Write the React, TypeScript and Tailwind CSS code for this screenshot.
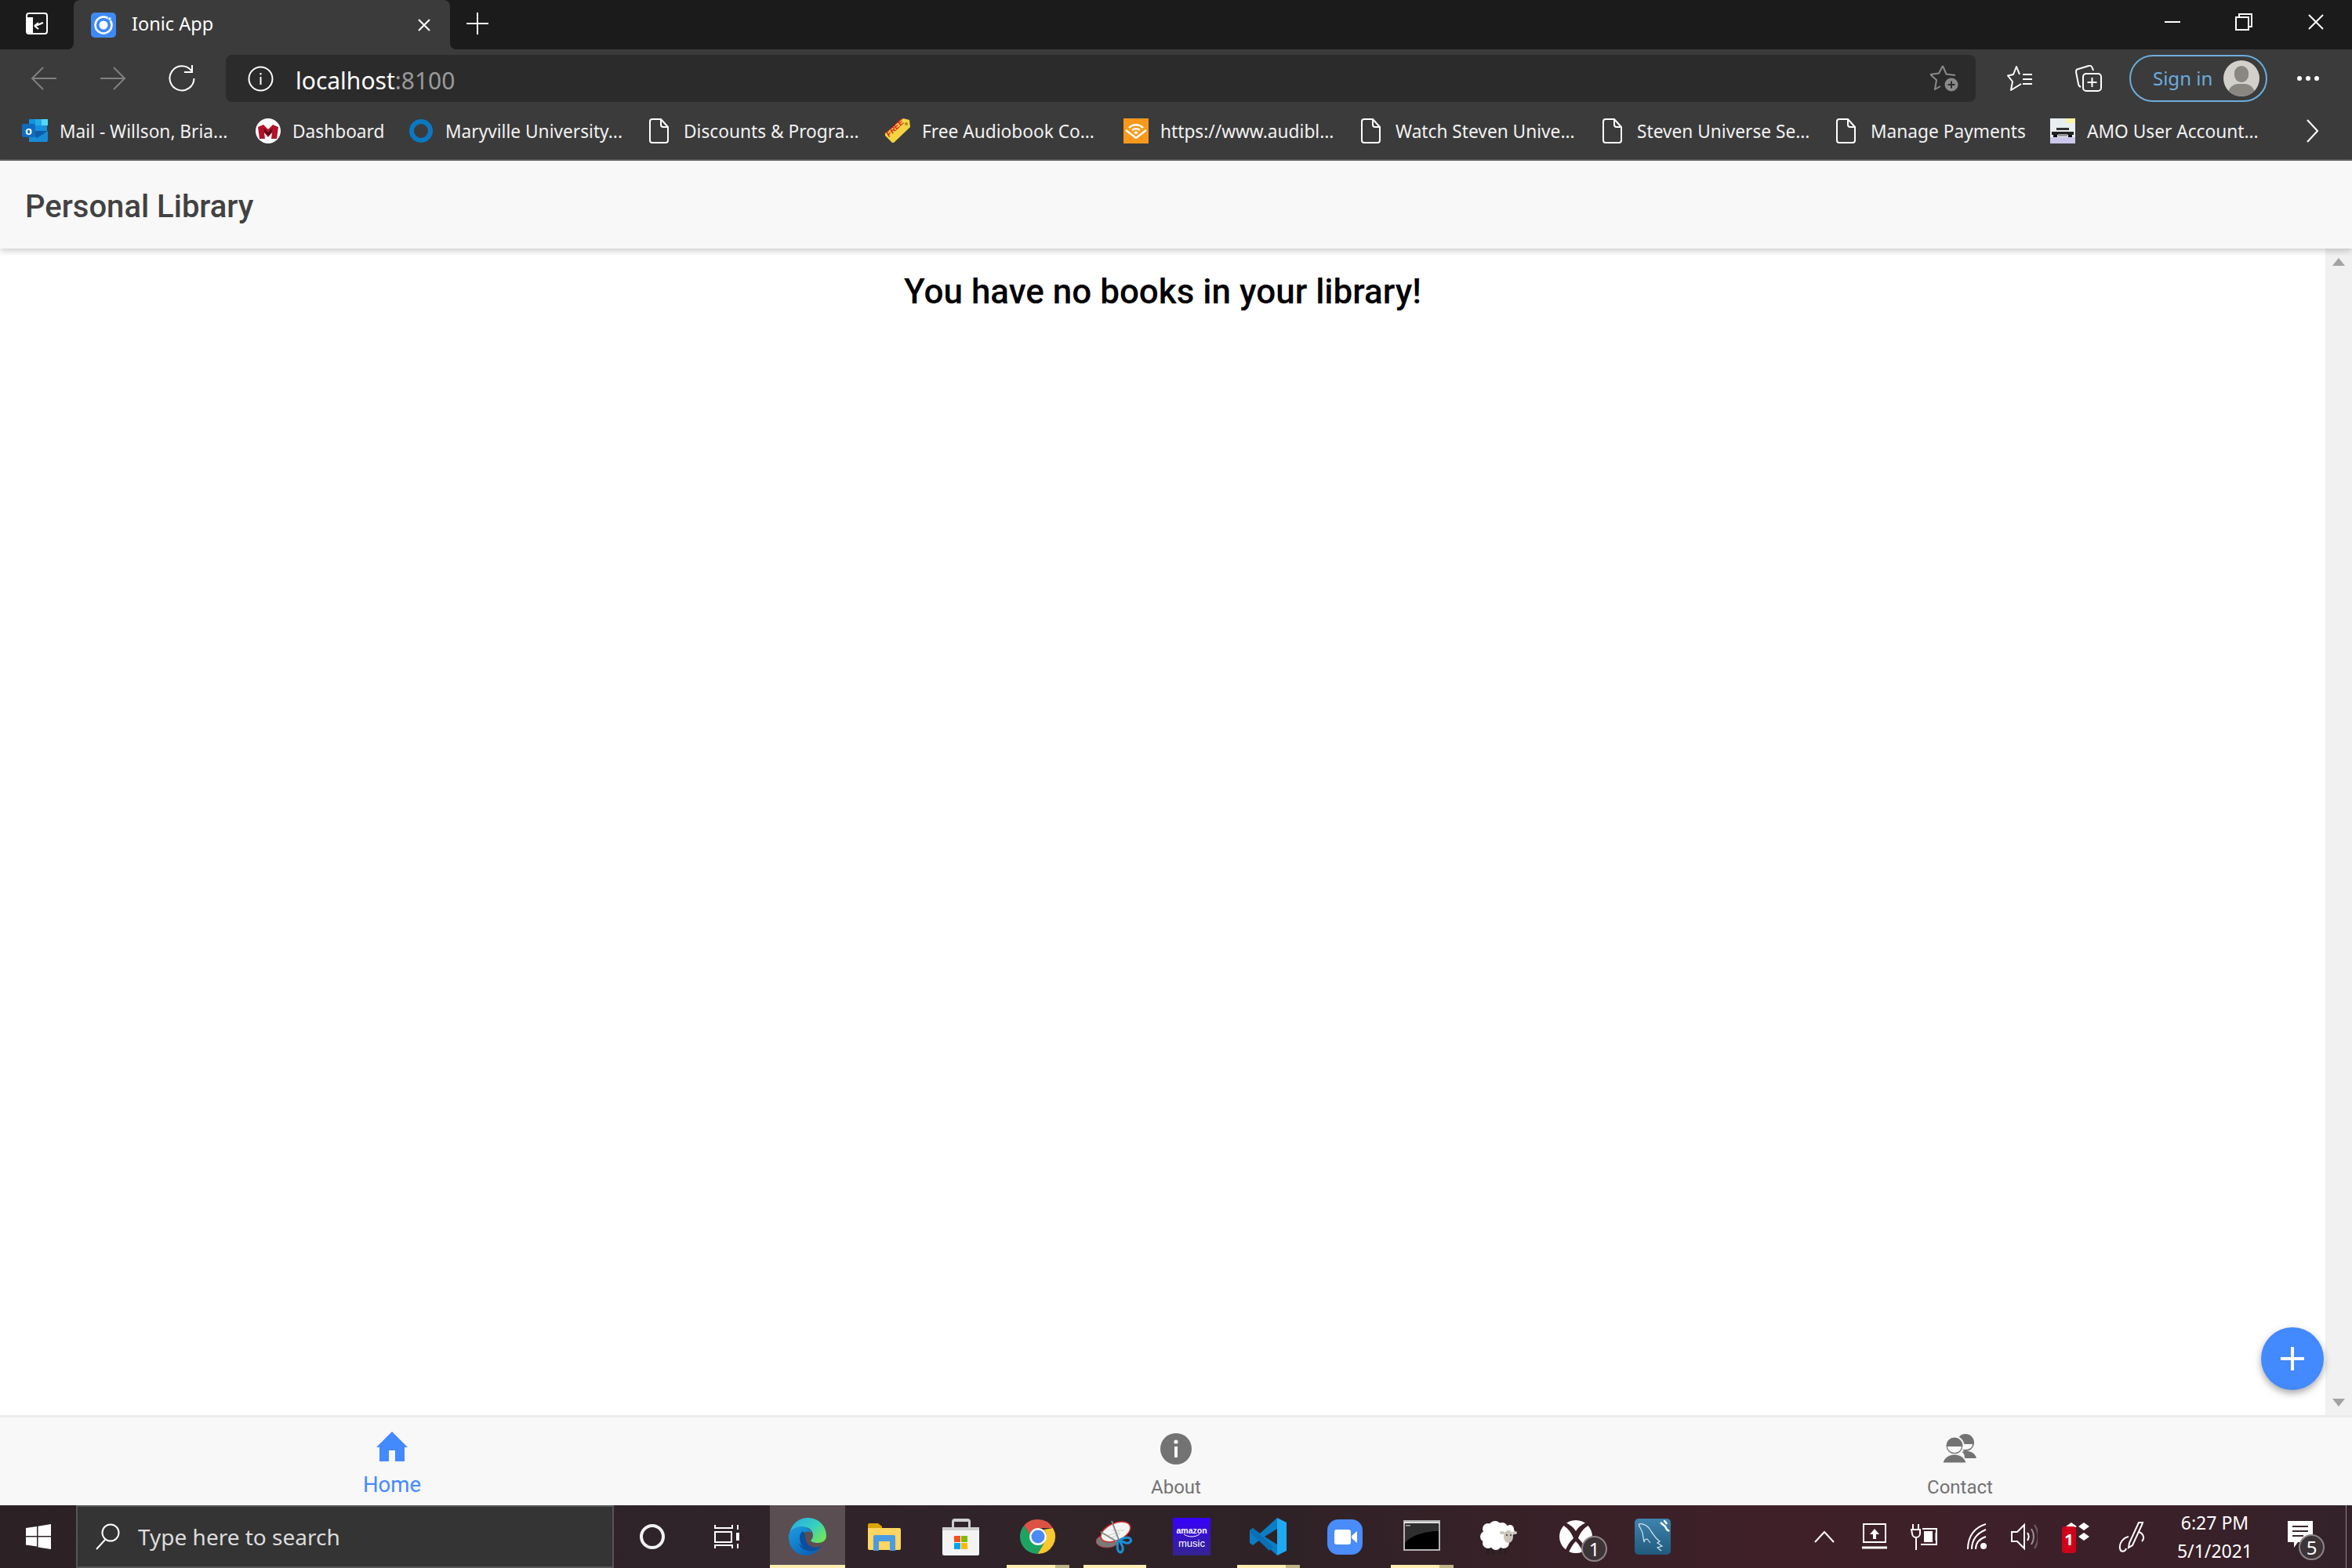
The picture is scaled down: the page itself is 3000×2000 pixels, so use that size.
import type { ReactNode } from 'react';

const PageIcon = () => (
  <svg width="26" height="32" viewBox="0 0 26 32" fill="none" stroke="#fff" strokeWidth="2">
    <path d="M4 1h11l9 10v17a3 3 0 0 1-3 3H4a3 3 0 0 1-3-3V4a3 3 0 0 1 3-3z" />
    <path d="M15 1v7a3 3 0 0 0 3 3h6" />
  </svg>
);

const OutlookIcon = () => (
  <svg width="34" height="32" viewBox="0 0 34 32">
    <rect x="9" y="1" width="23" height="15" fill="#1490df" />
    <rect x="17" y="1" width="8" height="8" fill="#28a8ea" />
    <rect x="25" y="1" width="8" height="8" fill="#50d9ff" />
    <path d="M9 16h24v12a2 2 0 0 1-2 2H9z" fill="#1a8ad6" />
    <path d="M9 16l24 0v0L19 25z" fill="#0a5ea8" />
    <rect x="0" y="7" width="17" height="17" rx="2" fill="#0f6cbd" />
    <text x="8.5" y="21" textAnchor="middle" fontSize="14" fontWeight="700" fill="#fff" fontFamily="Liberation Sans">o</text>
  </svg>
);

const MaryvilleMIcon = () => (
  <svg width="32" height="32" viewBox="0 0 32 32">
    <circle cx="16" cy="16" r="16" fill="#fff" />
    <path d="M3 11l7-3 6 6 6-6 7 3-2 15h-7l1-8-5 6-5-6 1 8H5z" fill="#b4122b" />
    <path d="M10 12l6 6 6-6-2 7-4 3-4-3z" fill="#5e0b18" />
  </svg>
);

const RingIcon = () => (
  <svg width="32" height="32" viewBox="0 0 32 32" fill="none">
    <ellipse cx="16" cy="16" rx="12" ry="12" stroke="#0a78c2" strokeWidth="6" />
  </svg>
);

const FreeTagIcon = () => (
  <svg width="34" height="32" viewBox="0 0 34 32">
    <path d="M24 0l8 2 1 9-21 20-2 0-9-9 0-3z" fill="#f5d442" />
    <circle cx="28" cy="7" r="2" fill="#a88a1c" />
    <text x="0" y="0" transform="translate(6 24) rotate(-44)" fontSize="10" fontWeight="700" fontStyle="italic" fill="#e21a1a" fontFamily="Liberation Sans">FREE</text>
  </svg>
);

const AudibleIcon = () => (
  <svg width="32" height="32" viewBox="0 0 32 32" fill="none" stroke="#fff" strokeWidth="2.4">
    <rect width="32" height="32" fill="#f8991c" stroke="none" />
    <path d="M3 15l13 10 13-10" />
    <path d="M7 12c5-5 13-5 18 0" />
    <path d="M11 15c3-2.500 7-2.500 10 0" />
    <path d="M14 19l2-1.500 2 1.500" />
  </svg>
);

const CarIcon = () => (
  <svg width="32" height="32" viewBox="0 0 32 32">
    <rect width="32" height="32" fill="#e9eef0" />
    <rect x="20" y="0" width="12" height="6" fill="#fbf3a6" />
    <rect x="0" y="24" width="32" height="8" fill="#cbc7ea" />
    <rect x="8" y="12" width="16" height="3" fill="#333" />
    <rect x="2" y="17" width="28" height="4" fill="#222" />
    <rect x="4" y="21" width="5" height="3" fill="#111" />
    <rect x="23" y="21" width="5" height="3" fill="#111" />
    <rect x="10" y="20" width="12" height="3" fill="#999" />
  </svg>
);

type Bookmark = { label: string; width: string; icon: ReactNode };

const bookmarks: Bookmark[] = [
  { label: 'Mail - Willson, Bria...', width: 'w-[297px]', icon: <OutlookIcon /> },
  { label: 'Dashboard', width: 'w-[195px]', icon: <MaryvilleMIcon /> },
  { label: 'Maryville University...', width: 'w-[304px]', icon: <RingIcon /> },
  { label: 'Discounts & Progra...', width: 'w-[304px]', icon: <PageIcon /> },
  { label: 'Free Audiobook Co...', width: 'w-[304px]', icon: <FreeTagIcon /> },
  { label: 'https://www.audibl...', width: 'w-[300px]', icon: <AudibleIcon /> },
  { label: 'Watch Steven Unive...', width: 'w-[308px]', icon: <PageIcon /> },
  { label: 'Steven Universe Se...', width: 'w-[298px]', icon: <PageIcon /> },
  { label: 'Manage Payments', width: 'w-[276px]', icon: <PageIcon /> },
  { label: 'AMO User Account...', width: 'w-[306px]', icon: <CarIcon /> },
];

const Tabs = () => (
  <div className="flex h-[63px] shrink-0 bg-[#1b1b1b]">
    <div className="h-full w-[94px] bg-[linear-gradient(to_top,#3b3b3b_10px,#1b1b1b_10px)]">
      <div className="flex h-full items-center justify-center rounded-br-[8px] bg-[#1b1b1b] pb-[3px]">
        <svg width="28" height="28" viewBox="0 0 28 28">
          <rect x="1" y="1" width="26" height="26" rx="3" fill="none" stroke="#fff" strokeWidth="2" />
          <path d="M1 6h8v21H4a3 3 0 0 1-3-3z" fill="#fff" />
          <path d="M22 13c-3 1-6 3-10 4M11 17l5-4M11 17l5 4" fill="none" stroke="#fff" strokeWidth="2.200" />
        </svg>
      </div>
    </div>
    <div className="flex h-full w-[480px] items-center rounded-t-[8px] bg-[#3b3b3b] pl-[22px]">
      <svg width="32" height="32" viewBox="0 0 32 32">
        <rect width="32" height="32" rx="5" fill="#4089f5" />
        <circle cx="16" cy="16" r="10.500" fill="none" stroke="#fff" strokeWidth="2.500" />
        <circle cx="16" cy="16" r="5.500" fill="#fff" />
        <circle cx="24" cy="8" r="2.200" fill="#fff" stroke="#4089f5" />
      </svg>
      <span className="mb-[1px] ml-[20px] text-[23.500px] leading-none text-white">Ionic App</span>
      <svg className="ml-auto mr-[25px]" width="16" height="16" viewBox="0 0 16 16" stroke="#fff" strokeWidth="2">
        <path d="M1 1l14 14M15 1L1 15" />
      </svg>
    </div>
    <div className="h-full flex-1 bg-[linear-gradient(to_top,#3b3b3b_10px,#1b1b1b_10px)]">
      <div className="flex h-full items-center rounded-bl-[8px] bg-[#1b1b1b] pb-[3px]">
        <svg className="ml-[21px]" width="28" height="28" viewBox="0 0 28 28" stroke="#fff" strokeWidth="2">
          <path d="M14 0v28M0 14h28" />
        </svg>
        <svg className="mb-[4px] ml-auto" width="20" height="2" viewBox="0 0 20 2" stroke="#fff" strokeWidth="2">
          <path d="M0 1h20" />
        </svg>
        <svg className="mb-[4px] ml-[70px]" width="22" height="22" viewBox="0 0 22 22" fill="none" stroke="#fff" strokeWidth="2">
          <rect x="1" y="5" width="16" height="16" />
          <path d="M5 5V1h16v16h-4" />
        </svg>
        <svg className="mb-[4px] ml-[71px] mr-[36px]" width="20" height="20" viewBox="0 0 20 20" stroke="#fff" strokeWidth="2">
          <path d="M1 1l18 18M19 1L1 19" />
        </svg>
      </div>
    </div>
  </div>
);

const Toolbar = () => (
  <div className="flex h-[74px] shrink-0 items-center bg-[#3b3b3b] pl-[12px]">
    <div className="flex w-[88px] justify-center">
      <svg width="34" height="30" viewBox="0 0 34 30" fill="none" stroke="#808080" strokeWidth="2">
        <path d="M33 15H2M16 1L2 15l14 14" />
      </svg>
    </div>
    <div className="flex w-[88px] justify-center">
      <svg width="34" height="30" viewBox="0 0 34 30" fill="none" stroke="#808080" strokeWidth="2">
        <path d="M1 15h31M18 1l14 14-14 14" />
      </svg>
    </div>
    <div className="flex w-[88px] justify-center">
      <svg width="34" height="34" viewBox="0 0 34 34" fill="none" stroke="#fff" strokeWidth="2">
        <path d="M29 7a15.500 15.500 0 1 0 3.500 10" />
        <path d="M20 8h10V-1" transform="translate(0 1)" />
      </svg>
    </div>
    <div className="ml-[12px] flex h-[60px] w-[2232px] items-center rounded-[8px] bg-[#2b2b2b] pl-[28px] pr-[22px]">
      <svg width="33" height="33" viewBox="0 0 33 33" fill="none" stroke="#fff" strokeWidth="2">
        <circle cx="16.500" cy="16.500" r="15" />
        <path d="M16.500 14v10M16.500 9v2.500" />
      </svg>
      <span className="ml-[28px] mt-[5px] text-[30px] leading-none text-white">
        localhost<span className="text-[#9a9a9a]">:8100</span>
      </span>
      <svg className="ml-auto" width="36" height="34" viewBox="0 0 36 34" fill="none" stroke="#8a8a8a" strokeWidth="2" strokeLinejoin="round">
        <path d="M16 1l4.500 10.500L32 13M13 27l-7 4 2-12-8-7 11-1.500L16 1" />
        <circle cx="27" cy="25" r="8.500" fill="#8a8a8a" stroke="none" />
        <path d="M27 20.500v9M22.500 25h9" stroke="#2b2b2b" />
      </svg>
    </div>
    <div className="flex w-[112px] justify-center">
      <svg width="32" height="32" viewBox="0 0 32 32" fill="none" stroke="#fff" strokeWidth="2" strokeLinejoin="round">
        <path d="M16 11L12 1 8 11l-7 1.500 6 7.500-2 11 9-5.500 4-2.500" />
        <path d="M20 11h12M20 17h12M20 23h12" />
      </svg>
    </div>
    <div className="flex w-[64px] justify-center">
      <svg width="34" height="34" viewBox="0 0 34 34" fill="none" stroke="#fff" strokeWidth="2">
        <rect x="10" y="11" width="23" height="22" rx="4" />
        <path d="M21.500 16v12M15.500 22h12" />
        <path d="M7 28c-2-1-3-2-3-4L1 9c0-2 1-4 3-4l13-4c2-1 4 0 5 3l1 3" />
      </svg>
    </div>
    <div className="ml-[20px] flex h-[60px] w-[176px] items-center rounded-full border-2 border-[#6cadde] pl-[28px]">
      <span className="whitespace-nowrap text-[24px] leading-none text-[#6cadde]">Sign in</span>
      <div className="relative ml-auto mr-[8px] size-[46px] shrink-0 overflow-hidden rounded-full bg-[#d2d0cb]">
        <div className="absolute left-[14px] top-[7px] h-[21px] w-[18px] rounded-full bg-[#8a8682]" />
        <div className="absolute left-[6px] top-[30px] h-[26px] w-[34px] rounded-full bg-[#8a8682]" />
      </div>
    </div>
    <div className="flex w-[104px] justify-center gap-[5px]">
      <div className="size-[6px] rounded-full bg-white" />
      <div className="size-[6px] rounded-full bg-white" />
      <div className="size-[6px] rounded-full bg-white" />
    </div>
  </div>
);

const BookmarksBar = () => (
  <div className="flex h-[68px] shrink-0 items-center border-b-2 border-[#5d5d5d] bg-[#3b3b3b] pb-[6px] pl-[28px]">
    {bookmarks.map((b) => (
      <div key={b.label} className={`flex shrink-0 items-center ${b.width}`}>
        <div className="flex w-[34px] shrink-0 justify-center">{b.icon}</div>
        <span className="ml-[14px] mt-[2px] whitespace-nowrap text-[22.700px] leading-none text-[#f2f2f2]">{b.label}</span>
      </div>
    ))}
    <svg className="ml-[21px]" width="16" height="30" viewBox="0 0 16 30" fill="none" stroke="#fff" strokeWidth="2">
      <path d="M2 1l13 14L2 29" />
    </svg>
  </div>
);

const AppContent = () => (
  <>
    <div className="relative z-10 flex h-[112px] shrink-0 items-center bg-[#f8f8f8] pl-[32px] pt-[5px] shadow-[0_3px_8px_rgba(0,0,0,0.2)]">
      <span className="font-['Roboto',sans-serif] text-[40px] font-medium leading-none text-[#424242]">Personal Library</span>
    </div>
    <div className="relative flex min-h-0 flex-1">
      <div className="flex-1 bg-white pt-[35px] text-center">
        <h1 className="font-['Roboto',sans-serif] text-[44px] font-medium leading-[40px] text-black">You have no books in your library!</h1>
      </div>
      <div className="flex w-[34px] flex-col items-center justify-between bg-[#f1f1f1] pb-[11px] pt-[12px]">
        <div className="size-0 border-x-[8px] border-b-[10px] border-x-transparent border-b-[#a3a3a3]" />
        <div className="size-0 border-x-[8px] border-t-[10px] border-x-transparent border-t-[#a3a3a3]" />
      </div>
      <div className="absolute bottom-[32px] right-[36px] flex size-[80px] items-center justify-center rounded-full bg-[#4389ff] shadow-[0_4px_10px_rgba(0,0,0,0.35)]">
        <svg width="32" height="32" viewBox="0 0 32 32" stroke="#fff" strokeWidth="4">
          <path d="M16 1v30M1 16h30" />
        </svg>
      </div>
    </div>
    <div className="grid h-[115px] shrink-0 grid-cols-3 border-t-[3px] border-[#ececec] bg-[#f8f8f8] font-['Roboto',sans-serif]">
      <div className="flex flex-col items-center pt-[18px]">
        <svg width="40" height="38" viewBox="0 0 40 38" fill="#4389ff">
          <path d="M20 0L40 20h-4v18H24V24h-8v14H4V20H0z" />
        </svg>
        <span className="mt-[16px] text-[27.500px] leading-none text-[#4389ff]">Home</span>
      </div>
      <div className="flex flex-col items-center pt-[20px]">
        <svg width="40" height="40" viewBox="0 0 40 40">
          <circle cx="20" cy="20" r="20" fill="#737373" />
          <circle cx="20" cy="11" r="2.600" fill="#f8f8f8" />
          <rect x="18" y="17" width="4" height="14" fill="#f8f8f8" />
        </svg>
        <span className="mt-[17px] text-[24px] leading-none text-[#737373]">About</span>
      </div>
      <div className="flex flex-col items-center pt-[20px]">
        <svg width="44" height="38" viewBox="0 0 44 38">
          <circle cx="29" cy="12" r="11" fill="#737373" />
          <path d="M20 14h18c0 4-4 7-9 7s-9-3-9-7z" fill="#f8f8f8" />
          <path d="M30 23c6 0 11 2 13 9H28c0-4-1-7-4-8 2-1 4-1 6-1z" fill="#737373" />
          <circle cx="15" cy="16" r="11.500" fill="#737373" stroke="#f8f8f8" strokeWidth="2" />
          <path d="M6 17h18c0 4-4 8-9 8s-9-4-9-8z" fill="#f8f8f8" />
          <path d="M15 27c7 0 13 4 15 11H0c2-7 8-11 15-11z" fill="#737373" stroke="#f8f8f8" strokeWidth="1" />
        </svg>
        <span className="mt-[19px] text-[24px] leading-none text-[#737373]">Contact</span>
      </div>
    </div>
  </>
);

const Edge = () => (
  <svg width="48" height="48" viewBox="0 0 48 48">
    <defs>
      <linearGradient id="edgeTop" x1="0" y1="0" x2="1" y2="0.7">
        <stop offset="0" stopColor="#25a9e6" />
        <stop offset="0.6" stopColor="#38cfc0" />
        <stop offset="1" stopColor="#6fe35e" />
      </linearGradient>
      <linearGradient id="edgeBlue" x1="0" y1="0" x2="0.7" y2="1">
        <stop offset="0" stopColor="#1b9de2" />
        <stop offset="1" stopColor="#0a62b8" />
      </linearGradient>
    </defs>
    <path d="M1 21C3 8 13 0 24 0c14 0 24 10 24 23 0 6-5 9-11 9-4 0-8-1-9-3 2-2 3-4 3-7 0-7-7-11-14-10C11 13 4 16 1 21z" fill="url(#edgeTop)" />
    <path d="M0 24C0 16 8 11 16 11c6 0 11 3 14 8-7-4-15 0-15 8 0 10 11 16 19 12 4-2 7-3 8-3-4 7-12 12-20 12C9 48 0 38 0 24z" fill="url(#edgeBlue)" />
    <path d="M18 17c-4 3-5 8-3 14 3 9 13 12 20 8 3-1 6-3 7-3-2 1-5 2-7 2-9 0-14-7-14-14 0-3-1-5-3-7z" fill="#0c4d9e" />
    <path d="M13 32c1 7 10 12 19 10 5-1 8-3 10-6-3 1-5 3-9 3-9 2-17-2-20-7z" fill="#0d4f96" />
  </svg>
);

const Explorer = () => (
  <svg width="48" height="48" viewBox="0 0 48 48">
    <path d="M3 9a2 2 0 0 1 2-2h11l5 4v6H3z" fill="#dca400" />
    <path d="M3 13h40a2 2 0 0 1 2 2v24a2 2 0 0 1-2 2H5a2 2 0 0 1-2-2z" fill="#ffd661" />
    <path d="M10 42V24a2 2 0 0 1 2-2h24a2 2 0 0 1 2 2v18h-7V30H17v12z" fill="#4a9be2" />
  </svg>
);

const Store = () => (
  <svg width="48" height="48" viewBox="0 0 48 48">
    <path d="M12 12V5a4 4 0 0 1 4-4h16a4 4 0 0 1 4 4v7h-3V5H15v7z" fill="#cfcfcf" />
    <path d="M0 12h47v34a2 2 0 0 1-2 2H2a2 2 0 0 1-2-2z" fill="#f3f3f3" />
    <rect x="0" y="12" width="47" height="4" fill="#cfcfcf" />
    <rect x="15" y="23" width="8" height="8" fill="#f25022" />
    <rect x="24" y="23" width="8" height="8" fill="#7fba00" />
    <rect x="15" y="32" width="8" height="8" fill="#00a4ef" />
    <rect x="24" y="32" width="8" height="8" fill="#ffb900" />
  </svg>
);

const Chrome = () => (
  <svg width="48" height="48" viewBox="0 0 48 48">
    <path d="M24 2a22 22 0 0 1 19 11H24a11 11 0 0 0-10.500 8L6 10A22 22 0 0 1 24 2z" fill="#dc5345" />
    <path d="M43 13a22 22 0 0 1-19.500 33l10-17A11 11 0 0 0 31 15z" fill="#f9c82d" />
    <path d="M6 10a22 22 0 0 0 17.500 36l10-17a11 11 0 0 1-20-8z" fill="#1da462" />
    <circle cx="24" cy="24" r="11" fill="#fff" />
    <circle cx="24" cy="24" r="8.500" fill="#4c8bf5" />
  </svg>
);

const Snip = () => (
  <svg width="48" height="48" viewBox="0 0 48 48" fill="none">
    <ellipse cx="14" cy="30" rx="14" ry="8" fill="#7a7a7a" stroke="#b6353f" strokeWidth="1" />
    <ellipse cx="25" cy="18" rx="20" ry="11" transform="rotate(-24 25 18)" fill="#f4f4f4" stroke="#d62e2e" strokeWidth="1.500" />
    <path d="M20 16h16M14 23l16-5M17 27l14-7" stroke="#cccccc" />
    <path d="M20 4l9 24M6 18l22 13" stroke="#888" strokeWidth="2" />
    <path d="M28 29c-1 6-1 12 1 14 3 3 6-1 5-6l-4-8" stroke="#1a8fd6" strokeWidth="3" />
    <path d="M29 29c6-4 13-5 15-2 2 3-2 6-6 5l-8-3" stroke="#1a8fd6" strokeWidth="3" />
  </svg>
);

const AmazonMusic = () => (
  <svg width="48" height="48" viewBox="0 0 48 48">
    <defs>
      <linearGradient id="amz" x1="0" y1="0" x2="0" y2="1">
        <stop offset="0" stopColor="#3800ff" />
        <stop offset="1" stopColor="#34248f" />
      </linearGradient>
    </defs>
    <rect width="48" height="48" fill="url(#amz)" />
    <text x="24" y="20" textAnchor="middle" fontSize="10.500" fontWeight="700" fill="#fff" fontFamily="Liberation Sans">amazon</text>
    <path d="M14 21c6 4 14 4 20 0" fill="none" stroke="#fff" strokeWidth="1" />
    <text x="24" y="37" textAnchor="middle" fontSize="13" fill="#fff" fontFamily="Liberation Sans">music</text>
  </svg>
);

const VSCode = () => (
  <svg width="48" height="48" viewBox="0 0 48 48">
    <path d="M35 0L13 20 4 13 0 16v16l4 3 9-7 22 20V34L19 24 35 14z" fill="#0b7dc4" />
    <path d="M35 0l12 6v36l-12 6z" fill="#1fa9f1" />
    <path d="M4 13l26 24-5 5L0 18z" fill="#0a6fb3" />
  </svg>
);

const Zoom = () => (
  <svg width="46" height="48" viewBox="0 0 46 48">
    <rect x="0" y="2" width="45" height="45" rx="14" fill="#4a8cfa" />
    <rect x="9" y="15" width="21" height="19" rx="3" fill="#fff" />
    <path d="M31 23l7-6v15l-7-6z" fill="#fff" />
  </svg>
);

const Terminal = () => (
  <svg width="48" height="48" viewBox="0 0 48 48">
    <rect x="0" y="3" width="47" height="39" fill="#b3b3b3" />
    <rect x="1" y="5" width="45" height="3" fill="#e0e0e0" />
    <rect x="2" y="7" width="43" height="33" fill="#000" />
    <path d="M2 7h43v10C25 17 8 24 2 32z" fill="#2f2f2f" />
    <rect x="3" y="9" width="6" height="1.500" fill="#aaa" />
  </svg>
);

const Sheep = () => (
  <svg width="48" height="48" viewBox="0 0 48 48">
    <path d="M7 36h5v11H7zM14 36h4v11h-4zM24 36h4v11h-4zM30 36h4v11h-4z" fill="#2a2024" />
    <g fill="#fff">
      <circle cx="10" cy="14" r="7" />
      <circle cx="19" cy="12" r="8" />
      <circle cx="28" cy="13" r="7" />
      <circle cx="7" cy="24" r="7" />
      <circle cx="10" cy="32" r="7" />
      <circle cx="20" cy="34" r="7" />
      <circle cx="30" cy="32" r="7" />
      <rect x="9" y="12" width="24" height="22" />
      <circle cx="38" cy="14" r="5" />
      <circle cx="32" cy="14" r="5" />
      <circle cx="40" cy="18" r="4" />
    </g>
    <ellipse cx="36" cy="24" rx="6" ry="8" fill="#c9c3b8" />
    <ellipse cx="28" cy="19" rx="3" ry="2" fill="#c9c3b8" />
    <ellipse cx="44" cy="19" rx="3" ry="2" fill="#c9c3b8" />
    <circle cx="34" cy="22" r="1" fill="#333" />
    <circle cx="39" cy="22" r="1" fill="#333" />
  </svg>
);

const Xbox = () => (
  <svg width="48" height="48" viewBox="0 0 48 48">
    <circle cx="24" cy="24" r="21" fill="#fff" />
    <path d="M10 6c6 2 11 6 14 11 3-5 8-9 14-11l3 3c-7 4-12 11-14 17 5 5 10 12 11 19l-4 2c-2-7-6-13-10-17-4 4-8 10-10 17l-4-2c1-7 6-14 11-19C19 20 14 13 7 9z" fill="#3b2028" />
  </svg>
);

const MySql = () => (
  <svg width="48" height="48" viewBox="0 0 48 48" fill="none">
    <defs>
      <linearGradient id="mysql" x1="0" y1="0" x2="0" y2="1">
        <stop offset="0" stopColor="#3e83ae" />
        <stop offset="1" stopColor="#215a7d" />
      </linearGradient>
    </defs>
    <rect x="1" y="1" width="46" height="46" rx="5" fill="url(#mysql)" />
    <path d="M6 8c5-1 10 1 14 6 4 6 7 12 13 16l-3 2 6 4-6 2 5 4M6 8c1 4 4 7 5 11l2 12c1-4 2-4 4-4l4 5" stroke="#d6e6ef" strokeWidth="1.200" />
    <path d="M34 6l6 5 2 4 3 2M38 4c2 0 3 2 4 4" stroke="#fff" strokeWidth="2.500" />
  </svg>
);

const CountBadge = ({ value }: { value: string }) => (
  <div className="absolute flex size-[33px] items-center justify-center rounded-full border-2 border-[#8d8587] bg-[#3d3437] text-[24px] leading-none text-white">
    {value}
  </div>
);

type TaskApp = { name: string; cell?: string; icon: ReactNode; bar?: 'open' | 'stacked' };

const taskApps: TaskApp[] = [
  { name: 'edge', icon: <Edge />, cell: 'bg-[#5b4e52]', bar: 'open' },
  { name: 'explorer', icon: <Explorer /> },
  { name: 'store', icon: <Store /> },
  { name: 'chrome', icon: <Chrome />, bar: 'stacked' },
  { name: 'snip', icon: <Snip />, bar: 'open' },
  { name: 'amazon', icon: <AmazonMusic /> },
  { name: 'code', icon: <VSCode />, bar: 'stacked' },
  { name: 'zoom', icon: <Zoom /> },
  { name: 'terminal', icon: <Terminal />, bar: 'stacked' },
  { name: 'sheep', icon: <Sheep /> },
];

const Taskbar = () => (
  <div className="flex h-[80px] shrink-0 items-stretch bg-[linear-gradient(90deg,#2c2226_0%,#30242a_40%,#2f2226_55%,#3f2029_75%,#3c2029_90%,#33222a_100%)]">
    <div className="flex w-[97px] items-center justify-center">
      <svg width="32" height="32" viewBox="0 0 32 32" fill="#fff">
        <path d="M0 5l14-2v12H0zM15.500 2.800L32 0v15H15.500zM0 16.500h14v12L0 26.500zM15.500 16.500H32V32l-16.500-2.500z" />
      </svg>
    </div>
    <div className="flex w-[686px] items-center border-2 border-[#565656] bg-[#343434] pl-[22px]">
      <svg width="32" height="34" viewBox="0 0 32 34" fill="none" stroke="#fff" strokeWidth="2">
        <circle cx="20" cy="12" r="10.500" />
        <path d="M13 21L2 33" />
      </svg>
      <span className="ml-[23px] text-[28px] leading-none text-[#dcdcdc]">Type here to search</span>
    </div>
    <div className="flex w-[98px] items-center justify-center">
      <div className="size-[32px] rounded-full border-[4px] border-[#f2f2f2]" />
    </div>
    <div className="mr-[8px] flex w-[92px] items-center justify-center">
      <svg width="32" height="32" viewBox="0 0 32 32" fill="none" stroke="#fff" strokeWidth="2">
        <path d="M1 1v4h22V1M1 31v-4h22v4M30 1v6M30 25v6" />
        <rect x="1" y="10" width="21" height="13" />
        <path d="M30 11v10" strokeWidth="4" />
      </svg>
    </div>
    {taskApps.map((app) => (
      <div key={app.name} className="relative flex w-[98px] items-center justify-center">
        {app.cell && <div className={`absolute inset-y-0 left-[1px] right-[1px] ${app.cell}`} />}
        <div className="relative">{app.icon}</div>
        {app.bar === 'open' && <div className={`absolute bottom-0 h-[4px] bg-[#fdeeb0] ${app.cell ? 'left-[1px] right-[1px]' : 'left-[9px] right-[9px]'}`} />}
        {app.bar === 'stacked' && (
          <div className="absolute bottom-0 left-[9px] right-[9px] flex h-[4px]">
            <div className="flex-1 bg-[#fdeeb0]" />
            <div className="w-[18px] bg-[#bfb283]" />
          </div>
        )}
      </div>
    ))}
    <div className="relative flex w-[98px] items-center justify-center">
      <Xbox />
      <div className="absolute left-[56px] top-[39px]">
        <CountBadge value="1" />
      </div>
    </div>
    <div className="flex w-[98px] items-center justify-center">
      <MySql />
    </div>
    <div className="ml-auto flex w-[82px] items-center justify-center">
      <svg width="26" height="16" viewBox="0 0 26 16" fill="none" stroke="#fff" strokeWidth="2">
        <path d="M1 15L13 2l12 13" />
      </svg>
    </div>
    <div className="flex w-[46px] items-center justify-center">
      <svg width="32" height="34" viewBox="0 0 32 34" fill="none" stroke="#fff" strokeWidth="2">
        <rect x="2" y="1" width="28" height="23" />
        <path d="M0 31h32" strokeWidth="3" />
        <path d="M16 7l6 7h-4v6h-4v-6h-4z" fill="#fff" stroke="none" />
      </svg>
    </div>
    <div className="flex w-[80px] items-center justify-center">
      <svg width="34" height="34" viewBox="0 0 34 34" fill="none" stroke="#fff" strokeWidth="2">
        <path d="M3 1v7M10 1v7M1 8h11v5a5 5 0 0 1-10 0zM7 18v16" />
        <path d="M15 7h18v20H13" />
        <path d="M33 12v10" strokeWidth="3" />
        <rect x="17" y="10" width="11" height="14" fill="#fff" stroke="none" />
      </svg>
    </div>
    <div className="flex w-[56px] items-center justify-center">
      <svg width="26" height="34" viewBox="0 0 26 34" fill="none" stroke="#fff" strokeWidth="2">
        <path d="M1 33C1 16 10 5 24 1M6 33c0-12 6-20 18-25M11 33c0-7 4-13 13-16" />
        <circle cx="21" cy="29" r="4" fill="#fff" stroke="none" />
      </svg>
    </div>
    <div className="flex w-[64px] items-center justify-center">
      <svg width="34" height="36" viewBox="0 0 34 36" fill="none" stroke="#fff" strokeWidth="2">
        <path d="M1 12h7l9-9v30l-9-9H1z" />
        <path d="M21 13c2 3 2 7 0 10" />
        <path d="M26 8c4 6 4 14 0 20" stroke="#9b8f92" />
        <path d="M30 3c6 9 6 21 0 30" stroke="#6f6266" />
      </svg>
    </div>
    <div className="relative flex w-[72px] items-center justify-center">
      <svg width="32" height="36" viewBox="0 0 32 36" fill="#fff">
        <path d="M8 0l7 5-7 5-7-5zM24 0l7 5-7 5-7-5zM24 13l7 5-7 5-7-5z" />
      </svg>
      <div className="absolute left-[16px] top-[27px] flex h-[34px] w-[18px] items-center justify-center rounded-[4px] bg-[#d0021b] text-[20px] font-bold leading-none text-white">
        1
      </div>
    </div>
    <div className="flex w-[66px] items-center justify-center">
      <svg width="34" height="40" viewBox="0 0 34 40" fill="none" stroke="#fff" strokeWidth="2">
        <path d="M31 2l-5 0-12 26-1 6 5-3 12-26z" />
        <path d="M13 20C5 22 1 29 2 35s7 4 8 0M26 14c6 2 8 8 4 12" />
      </svg>
    </div>
    <div className="flex w-[146px] flex-col items-center justify-center gap-[13px] text-[23px] leading-none text-white">
      <span>6:27 PM</span>
      <span>5/1/2021</span>
    </div>
    <div className="relative flex w-[72px] items-center justify-center">
      <svg width="32" height="40" viewBox="0 0 32 40">
        <path d="M0 0h32v27H13l-5 7v-7H0z" fill="#fff" />
        <path d="M6 7h20M6 13h20M6 19h14" stroke="#3a2a2e" strokeWidth="2" />
      </svg>
      <div className="absolute left-[34px] top-[37px]">
        <CountBadge value="5" />
      </div>
    </div>
    <div className="ml-[22px] w-[8px] border-l border-[#8d8587]" />
  </div>
);

export default function App() {
  return (
    <div className="flex h-[2000px] w-[3000px] flex-col overflow-hidden bg-white font-['Noto_Sans',sans-serif]">
      <Tabs />
      <Toolbar />
      <BookmarksBar />
      <AppContent />
      <Taskbar />
    </div>
  );
}
